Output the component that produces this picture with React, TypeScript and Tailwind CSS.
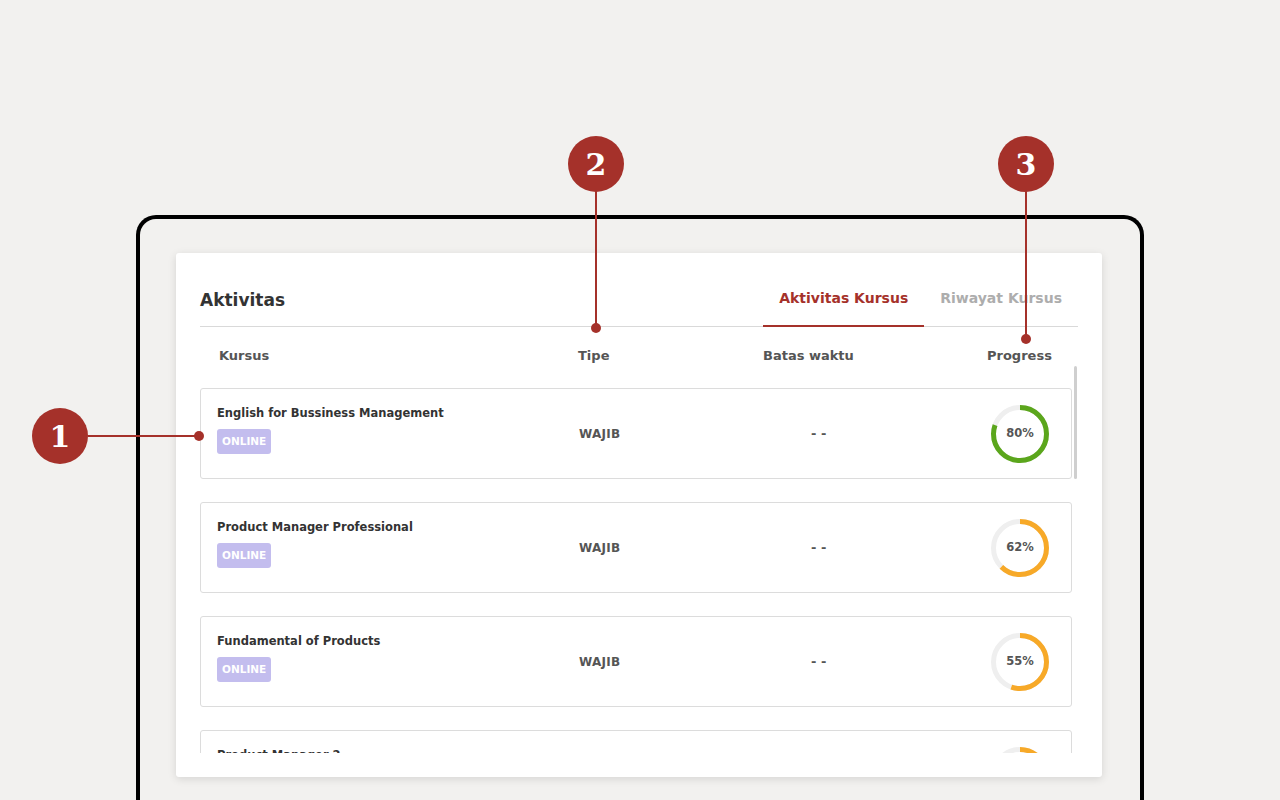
import { FC } from "react"

type Course = {
  title: string
  type: string
  deadline: string
  progress: number
}

const courses: Course[] = [
  { title: "English for Bussiness Management", type: "WAJIB", deadline: "- -", progress: 80 },
  { title: "Product Manager Professional", type: "WAJIB", deadline: "- -", progress: 62 },
  { title: "Fundamental of Products", type: "WAJIB", deadline: "- -", progress: 55 },
  { title: "Product Manager 2", type: "WAJIB", deadline: "- -", progress: 40 },
]

const ProgressRing: FC<{ value: number }> = ({ value }) => {
  const r = 26.5
  const c = 2 * Math.PI * r
  const color = value >= 75 ? "#5ba61c" : "#f7a928"
  return (
    <div className="relative w-[60px] h-[60px] flex items-center justify-center">
      <svg width="60" height="60" viewBox="0 0 60 60" className="absolute inset-0 -rotate-90">
        <circle cx="30" cy="30" r={r} fill="none" stroke="#efefef" strokeWidth="5" />
        <circle
          cx="30"
          cy="30"
          r={r}
          fill="none"
          stroke={color}
          strokeWidth="5"
          strokeDasharray={`${(c * value) / 100} ${c}`}
        />
      </svg>
      <span className="relative text-[11.5px] font-bold text-[#555]">{value}%</span>
    </div>
  )
}

const CourseRow: FC<{ course: Course }> = ({ course }) => (
  <div className="shrink-0 h-[91px] w-[872px] flex border border-[#dcdcdc] rounded-[3px] bg-white">
    <div className="w-[378px] pl-4 pt-[16px]">
      <p className="text-[11.5px] leading-4 font-bold text-[#333]">{course.title}</p>
      <span className="inline-block mt-[8px] h-[25px] leading-[25px] px-[5px] rounded-[3px] bg-[#c3bdee] text-white text-[10.5px] font-bold">
        ONLINE
      </span>
    </div>
    <div className="w-[185px] flex items-center text-[12px] font-bold text-[#555] tracking-wide">
      {course.type}
    </div>
    <div className="w-[224px] flex items-center pl-[47px] text-[13px] font-bold text-[#555]">
      {course.deadline}
    </div>
    <div className="flex items-center pl-[2px]">
      <ProgressRing value={course.progress} />
    </div>
  </div>
)

const Marker: FC<{ n: number; className: string }> = ({ n, className }) => (
  <div
    className={`absolute w-[56px] h-[56px] rounded-full bg-[#a5312a] flex items-center justify-center text-white text-[30px] font-bold ${className}`}
    style={{ fontFamily: '"DejaVu Serif", serif' }}
  >
    {n}
  </div>
)

export default function App() {
  return (
    <div
      className="relative w-full h-[800px] overflow-hidden bg-[#f2f1ef]"
      style={{ fontFamily: '"DejaVu Sans", Inter, sans-serif' }}
    >
      <div className="pt-[215px] pl-[136px]">
        <div className="w-[1008px] h-[620px] border-4 border-b-0 border-black rounded-t-[20px] pt-[34px] pl-[36px]">
          <div className="w-[926px] h-[524px] bg-white rounded-[3px] shadow-[0_2px_8px_rgba(0,0,0,0.12)] px-6 pt-[35px] pb-6 flex flex-col">
            <div className="flex items-end justify-between border-b border-[#d9d9d9]">
              <h2 className="text-[17px] leading-6 font-bold text-[#333] pb-[14px]">Aktivitas</h2>
              <div className="flex">
                <button className="px-4 pb-[17px] text-[14px] leading-5 font-bold text-[#a5312a] border-b-2 border-[#a5312a] -mb-px">
                  Aktivitas Kursus
                </button>
                <button className="px-4 pb-[18px] text-[14px] leading-5 font-bold text-[#adadad]">
                  Riwayat Kursus
                </button>
              </div>
            </div>
            <div className="flex pt-[19px] text-[13px] leading-5 font-bold text-[#555]">
              <div className="w-[378px] pl-[19px]">Kursus</div>
              <div className="w-[185px]">Tipe</div>
              <div className="w-[224px]">Batas waktu</div>
              <div>Progress</div>
            </div>
            <div className="flex-1 min-h-0 flex gap-[2px] overflow-hidden">
              <div className="flex flex-col gap-[23px] pt-[22px]">
                {courses.map((c) => (
                  <CourseRow key={c.title} course={c} />
                ))}
              </div>
              <div className="w-[3px]">
                <div className="h-[113px] w-[3px] rounded-full bg-[#cfcfcf]" />
              </div>
            </div>
          </div>
        </div>
      </div>

      {/* annotation 1 */}
      <Marker n={1} className="left-[32px] top-[408px]" />
      <div className="absolute left-[88px] top-[435px] w-[111px] h-[2px] bg-[#a5312a]" />
      <div className="absolute left-[194px] top-[431px] w-[10px] h-[10px] rounded-full bg-[#a5312a]" />

      {/* annotation 2 */}
      <Marker n={2} className="left-[568px] top-[136px]" />
      <div className="absolute left-[595px] top-[190px] w-[2px] h-[138px] bg-[#a5312a]" />
      <div className="absolute left-[591px] top-[323px] w-[10px] h-[10px] rounded-full bg-[#a5312a]" />

      {/* annotation 3 */}
      <Marker n={3} className="left-[998px] top-[136px]" />
      <div className="absolute left-[1025px] top-[190px] w-[2px] h-[149px] bg-[#a5312a]" />
      <div className="absolute left-[1021px] top-[334px] w-[10px] h-[10px] rounded-full bg-[#a5312a]" />
    </div>
  )
}
